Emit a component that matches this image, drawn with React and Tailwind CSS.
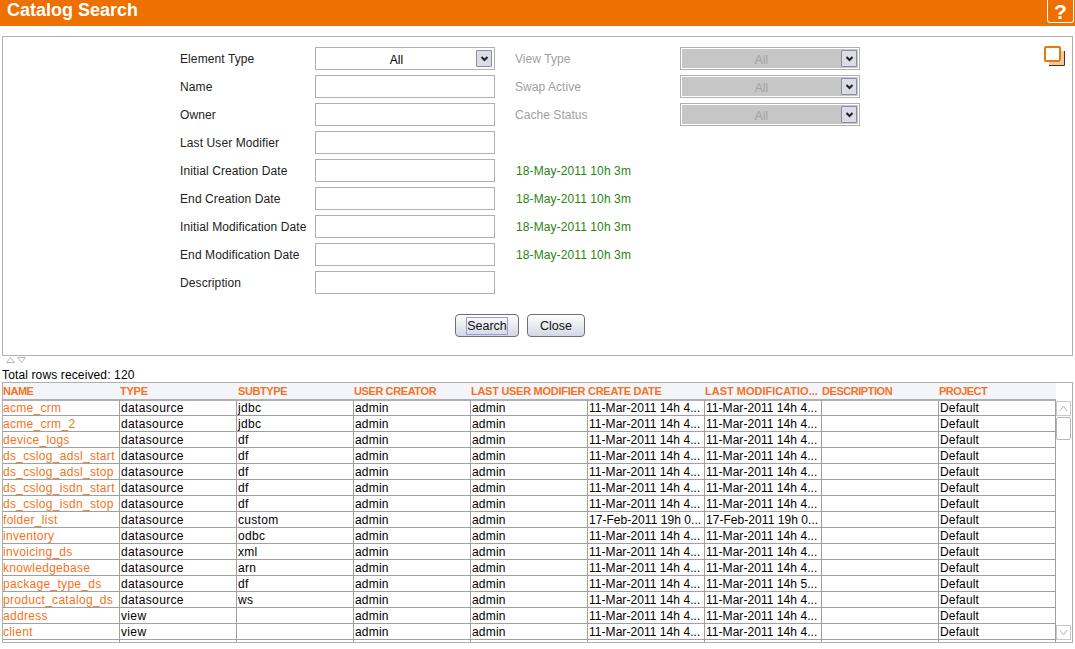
import React from 'react';

const COLUMNS = [
  ['NAME', 'tracking-[-0.5px]'],
  ['TYPE', 'tracking-[-0.25px]'],
  ['SUBTYPE', 'tracking-[-0.4px] pl-[1px]'],
  ['USER CREATOR', 'tracking-[-0.4px]'],
  ['LAST USER MODIFIER', 'tracking-[-0.28px]'],
  ['CREATE DATE', 'tracking-[-0.27px]'],
  ['LAST MODIFICATIO...', 'tracking-normal'],
  ['DESCRIPTION', 'tracking-[-0.45px]'],
  ['PROJECT', 'tracking-[-0.55px]'],
];

const MAR = '11-Mar-2011 14h 4...';
const FEB = '17-Feb-2011 19h 0...';

const ROWS = [
  ['acme_crm', 'datasource', 'jdbc', MAR, MAR],
  ['acme_crm_2', 'datasource', 'jdbc', MAR, MAR],
  ['device_logs', 'datasource', 'df', MAR, MAR],
  ['ds_cslog_adsl_start', 'datasource', 'df', MAR, MAR],
  ['ds_cslog_adsl_stop', 'datasource', 'df', MAR, MAR],
  ['ds_cslog_isdn_start', 'datasource', 'df', MAR, MAR],
  ['ds_cslog_isdn_stop', 'datasource', 'df', MAR, MAR],
  ['folder_list', 'datasource', 'custom', FEB, FEB],
  ['inventory', 'datasource', 'odbc', MAR, MAR],
  ['invoicing_ds', 'datasource', 'xml', MAR, MAR],
  ['knowledgebase', 'datasource', 'arn', MAR, MAR],
  ['package_type_ds', 'datasource', 'df', MAR, '11-Mar-2011 14h 5...'],
  ['product_catalog_ds', 'datasource', 'ws', MAR, MAR],
  ['address', 'view', '', MAR, MAR],
  ['client', 'view', '', MAR, MAR],
];

function ArrowButton() {
  return (
    <span className="flex items-center justify-center w-[16px] h-[17px] border border-[#8a8ca4] rounded-[1px] bg-[#dcdce6]">
      <svg width="9" height="6" viewBox="0 0 9 6">
        <path d="M1.5 1 L4.5 4 L7.5 1" fill="none" stroke="#222" strokeWidth="2" />
      </svg>
    </span>
  );
}

function Select({ disabled }) {
  return (
    <div className={`relative flex items-center justify-center w-[180px] h-[23px] border border-[#b0b0b0] text-[12px] ${disabled ? 'bg-[#c6c6c6] text-[#a2a2a2] shadow-[inset_0_0_0_1px_#fff]' : 'bg-white text-black'}`}>
      <span className="mt-[2px] mr-[17px]">All</span>
      <span className="absolute right-[2px] top-[2px]">
        <ArrowButton />
      </span>
    </div>
  );
}

function TextBox() {
  return <div className="w-[180px] h-[23px] border border-[#b0b0b0] bg-white" />;
}

function FormRow({ label, children, side }) {
  return (
    <div className="flex items-center h-[23px] mb-[5px]">
      <span className="w-[135px] text-[12px] leading-[14px] tracking-[0.1px] text-[#222]">{label}</span>
      {children}
      <div className="ml-[20px] flex items-center">{side}</div>
    </div>
  );
}

function DisabledSide({ label }) {
  return (
    <>
      <span className="w-[165px] text-[12px] tracking-[0.05px] text-[#a0a0a0]">{label}</span>
      <Select disabled />
    </>
  );
}

function DateHint() {
  return <span className="ml-[1px] text-[12px] tracking-[0.1px] text-[#2a8312]">18-May-2011 10h 3m</span>;
}

function PushButton({ children, focused, width }) {
  return (
    <button className={`flex items-center justify-center h-[23px] rounded-[4px] border border-[#707070] bg-gradient-to-b from-white to-[#d4d6e4] text-[12.5px] text-[#111] ${width}`}>
      <span className={focused ? 'border border-[#9a9ad8] h-[18px] leading-[16px]' : 'h-[18px] leading-[18px]'}>{children}</span>
    </button>
  );
}

function Cell({ children, link, tracking }) {
  return (
    <div className={`w-[117px] h-[16px] shrink-0 border-r border-b border-[#a0a0a0] text-[12px] leading-[17px] whitespace-nowrap overflow-hidden ${link ? 'text-[#f2741e]' : 'pl-[1px] text-black'} ${tracking}`}>
      {children}
    </div>
  );
}

export default function App() {
  return (
    <div className="w-[1075px] h-[649px] overflow-hidden bg-white font-['Liberation_Sans',Arial,sans-serif]">
      {/* Title bar */}
      <header className="flex items-start justify-between h-[26px] bg-[#ee7000] pl-[7px] pr-[1px]">
        <h1 className="text-[18px] leading-[21px] font-bold text-white">Catalog Search</h1>
        <button className="flex items-center justify-center w-[27px] h-[23px] border border-t-0 border-white rounded-b-[3px] text-[21px] leading-[21px] font-bold text-white">?</button>
      </header>

      {/* Search form */}
      <section className="relative mt-[10px] ml-[2px] w-[1071px] h-[320px] border border-[#b0b0b0] pt-[10px] pl-[177px]">
        <FormRow label="Element Type" side={<DisabledSide label="View Type" />}><Select /></FormRow>
        <FormRow label="Name" side={<DisabledSide label="Swap Active" />}><TextBox /></FormRow>
        <FormRow label="Owner" side={<DisabledSide label="Cache Status" />}><TextBox /></FormRow>
        <FormRow label="Last User Modifier"><TextBox /></FormRow>
        <FormRow label="Initial Creation Date" side={<DateHint />}><TextBox /></FormRow>
        <FormRow label="End Creation Date" side={<DateHint />}><TextBox /></FormRow>
        <FormRow label="Initial Modification Date" side={<DateHint />}><TextBox /></FormRow>
        <FormRow label="End Modification Date" side={<DateHint />}><TextBox /></FormRow>
        <FormRow label="Description"><TextBox /></FormRow>
        <div className="flex gap-[8px] mt-[20px] ml-[275px]">
          <PushButton focused width="w-[64px]">Search</PushButton>
          <PushButton width="w-[58px]">Close</PushButton>
        </div>
        <svg className="absolute right-[7px] top-[9px]" width="21" height="20" viewBox="0 0 21 20">
          <path d="M18.5 5 V17.5 H5" fill="none" stroke="#f4c8a0" strokeWidth="3" />
          <path d="M20.5 5 V19.5 H5" fill="none" stroke="#5c2c08" />
          <rect x="1" y="1" width="15" height="14" rx="1" fill="#fff" stroke="#e8770c" strokeWidth="2" />
        </svg>
      </section>

      {/* Splitter arrows */}
      <div className="flex gap-[2px] ml-[6px] mt-[1px] h-[7px]">
        <svg width="9" height="6" viewBox="0 0 9 6"><path d="M0.5 5.5 L4.5 0.5 L8.5 5.5 Z" fill="none" stroke="#b8b8b8" /></svg>
        <svg width="9" height="6" viewBox="0 0 9 6"><path d="M0.5 0.5 L4.5 5.5 L8.5 0.5 Z" fill="none" stroke="#b8b8b8" /></svg>
      </div>

      <div className="ml-[2px] h-[18px] pt-[2px] text-[12px] leading-[18px] tracking-[0.13px] text-black">Total rows received: 120</div>

      {/* Results */}
      <section className="relative ml-[2px] w-[1071px] h-[261px] border border-[#b0b0b0] overflow-hidden">
        <div className="flex w-[1053px] h-[16px] bg-[#f4f4fb] border-b-2 border-[#b0b0b0] box-content -mb-[1px]">
          {COLUMNS.map(([name, tracking]) => (
            <div key={name} className={`w-[117px] shrink-0 text-[11px] leading-[17px] font-bold text-[#f2741e] whitespace-nowrap overflow-hidden ${tracking}`}>{name}</div>
          ))}
        </div>
        <div className="w-[1053px]">
          {ROWS.map((r) => (
            <div key={r[0]} className="flex">
              <Cell link tracking="tracking-[0.3px]">{r[0]}</Cell>
              <Cell tracking="tracking-[0.35px]">{r[1]}</Cell>
              <Cell tracking="tracking-[0.3px]">{r[2]}</Cell>
              <Cell tracking="tracking-[0.2px]">admin</Cell>
              <Cell tracking="tracking-[0.2px]">admin</Cell>
              <Cell tracking="tracking-[0.05px]">{r[3]}</Cell>
              <Cell tracking="tracking-[0.05px]">{r[4]}</Cell>
              <Cell />
              <Cell tracking="tracking-[0.15px]">Default</Cell>
            </div>
          ))}
          <div className="flex">
            {COLUMNS.map(([name]) => <Cell key={name} />)}
          </div>
        </div>

        {/* Scrollbar */}
        <div className="absolute right-[1px] top-[18px] w-[15px] h-[239px] flex flex-col">
          <div className="flex items-center justify-center h-[15px] border border-[#c8c8c8]">
            <svg width="9" height="7" viewBox="0 0 9 7"><path d="M1 6 L4.5 1 L8 6" fill="none" stroke="#b4b4b4" /></svg>
          </div>
          <div className="h-[23px] mt-[1px] border border-[#b8b8b8] rounded-[2px] bg-white" />
          <div className="flex-1" />
          <div className="flex items-center justify-center h-[15px] border border-[#c8c8c8]">
            <svg width="9" height="7" viewBox="0 0 9 7"><path d="M1 1 L4.5 6 L8 1" fill="none" stroke="#b4b4b4" /></svg>
          </div>
        </div>
      </section>
    </div>
  );
}
